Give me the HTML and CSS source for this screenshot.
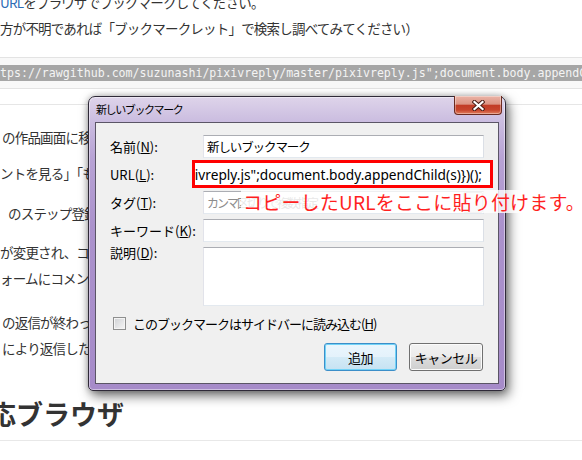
FILE: index.html
```html
<!DOCTYPE html>
<html lang="ja">
<head>
<meta charset="utf-8">
<title>pixivreply</title>
<link rel="stylesheet" href="styles.css">
</head>
<body>
<main class="page">
  <p class="intro first"><a class="link">URL</a>をブラウザでブックマークしてください。</p>
  <p class="intro">方が不明であれば「ブックマークレット」で検索し調べてみてください）</p>
  <pre class="code"><code class="sel">https://rawgithub.com/suzunashi/pixivreply/master/pixivreply.js";document.body.appendChild(s)})();</code></pre>
  <hr class="rule">
  <div class="steps">
    <p class="step s1">の作品画面に移</p>
    <p class="step s2">ントを見る」「もっ</p>
    <p class="step s3">のステップ登録</p>
    <p class="step s4">が変更され、コ<br>ォームにコメン</p>
    <p class="step s5">の返信が終わっ<br>により返信したコ</p>
  </div>
  <h2 class="heading">応ブラウザ</h2>
</main>

<div class="dialog">
  <div class="titlebar">
    <span class="title">新しいブックマーク</span>
    <span class="close"><svg width="13" height="11" viewBox="0 0 13 11"><path d="M2.5 2 L10.5 9 M10.5 2 L2.5 9" stroke="#4a1c15" stroke-width="4.2" stroke-linecap="square"/><path d="M2.5 2 L10.5 9 M10.5 2 L2.5 9" stroke="#ffffff" stroke-width="2.2" stroke-linecap="square"/></svg></span>
  </div>
  <div class="client">
    <div class="form">
      <label class="lbl">名前(<u>N</u>):</label>
      <div class="field"><span class="val">新しいブックマーク</span></div>
      <label class="lbl">URL(<u>L</u>):</label>
      <div class="field"></div>
      <label class="lbl">タグ(<u>T</u>):</label>
      <div class="field tag"><span class="ph">カンマ区切りで複数指定</span><span class="drop"></span></div>
      <label class="lbl">キーワード(<u>K</u>):</label>
      <div class="field"></div>
      <label class="lbl top">説明(<u>D</u>):</label>
      <div class="field area"></div>
    </div>
    <div class="check"><span class="box"></span><span class="check-text">このブックマークはサイドバーに読み込む(<u>H</u>)</span></div>
    <div class="buttons"><span class="btn default">追加</span><span class="btn">キャンセル</span></div>
  </div>
</div>

<div class="callout"><span class="callout-text">pixivreply.js";document.body.appendChild(s)})();</span></div>
<div class="note">コピーしたURLをここに貼り付けます。</div>
</body>
</html>
```
FILE: styles.css
```css
html, body {
  margin: 0;
  padding: 0;
}
body {
  width: 582px;
  height: 460px;
  overflow: hidden;
  position: relative;
  background: #ffffff;
  font-family: "Noto Sans CJK JP", "Noto Sans", sans-serif;
}

/* ---------- page behind the dialog ---------- */
.page {
  color: #333333;
  font-size: 13.5px;
  letter-spacing: -0.8px;
}
.intro {
  margin: 0;
  line-height: 26px;
  white-space: nowrap;
}
.intro.first {
  margin-top: -11px;
}
.link {
  color: #2d6cb5;
}
.code {
  margin: 16px 0 0;
  padding: 7px 0;
  border-top: 1px solid #e3e3e3;
  border-bottom: 1px solid #e3e3e3;
  background: #f8f8f8;
  white-space: nowrap;
  overflow: hidden;
  font: 11.6px/16px "DejaVu Sans Mono", "Liberation Mono", monospace;
  letter-spacing: 0;
}
.sel {
  display: inline-block;
  margin-left: -14px;
  line-height: 16px;
  background: #a6a6a6;
  color: #f4f4f4;
  font: inherit;
}
.rule {
  margin: 15px 0 0;
  border: 0;
  border-top: 1px solid #e6e6e6;
  height: 0;
}
.step {
  margin: 0;
  line-height: 26px;
  white-space: nowrap;
}
.s1 { margin-top: 19px; padding-left: 2px; }
.s2 { margin-top: 10px; }
.s3 { margin-top: 14px; padding-left: 8px; }
.s4 { margin-top: 13px; }
.s5 { margin-top: 18px; padding-left: 2px; }
.heading {
  margin: 35px 0 0;
  padding: 0 0 8px;
  border-bottom: 1px solid #e8e8e8;
  font-size: 27px;
  line-height: 36px;
  font-weight: 700;
  letter-spacing: 0;
  text-indent: -11px;
  color: #333333;
}

/* ---------- dialog ---------- */
.dialog {
  position: absolute;
  left: 88px;
  top: 96px;
  width: 404px;
  padding: 0 6px 6px 6px;
  border: 1px solid #2f2a38;
  border-radius: 7px 7px 5px 5px;
  background: linear-gradient(180deg, #ded4ea 0px, #cbbde0 24px, #b8a3d5 60px, #ab92cc 130px, #a68bc9 100%);
  box-shadow: inset 0 0 0 1px rgba(255,255,255,0.45), 3px 5px 12px rgba(0,0,0,0.55), 0 0 6px rgba(0,0,0,0.25);
}
.titlebar {
  position: relative;
  height: 25px;
  display: flex;
  align-items: center;
  padding-left: 1px;
}
.title {
  font-size: 11px;
  letter-spacing: -1.4px;
  color: #000000;
  line-height: 25px;
}
.close {
  position: absolute;
  top: -1px;
  left: 359px;
  width: 46px;
  height: 18px;
  border: 1px solid #6a2a20;
  border-top: 0;
  border-radius: 0 0 4px 4px;
  background: linear-gradient(180deg, #ebb3a6 0%, #dc9483 45%, #c23c26 52%, #c7452d 78%, #e2805f 100%);
  box-shadow: inset 0 0 0 1px rgba(255,255,255,0.35);
  display: flex;
  align-items: center;
  justify-content: center;
}
.close svg {
  display: block;
}
.client {
  border: 1px solid #5b5566;
  background: #f0f0f0;
  padding: 12px 14px 12px 14px;
}
.form {
  display: grid;
  grid-template-columns: 93px 281px;
  grid-template-rows: 23px 23px 23px 23px 59px;
  row-gap: 5px;
}
.lbl {
  display: flex;
  align-items: center;
  font-size: 13px;
  color: #000000;
  white-space: nowrap;
  letter-spacing: 0;
}
.lbl.top {
  align-items: flex-start;
  line-height: 14px;
  margin-top: -1px;
}
.field {
  box-sizing: border-box;
  background: #ffffff;
  border: 1px solid;
  border-color: #abadb3 #dbdfe6 #e3e9ef #e2e3ea;
  display: flex;
  align-items: center;
  padding-left: 3px;
  overflow: hidden;
  position: relative;
}
.val {
  font-size: 12.5px;
  letter-spacing: -1.1px;
  color: #000000;
  white-space: nowrap;
}
.ph {
  font-size: 12px;
  letter-spacing: -2px;
  color: #8c8c8c;
  white-space: nowrap;
}
.drop {
  position: absolute;
  right: 0;
  top: 0;
  width: 20px;
  height: 21px;
  box-sizing: border-box;
  border: 1px solid #c5c5c5;
  border-radius: 2px;
  background: linear-gradient(180deg, #f6f6f6, #e2e2e2);
}
.check {
  margin: 11px 0 0 3px;
  height: 13px;
  display: flex;
  align-items: center;
  gap: 7px;
}
.box {
  width: 13px;
  height: 13px;
  box-sizing: border-box;
  border: 1px solid #8e8f8f;
  background: linear-gradient(135deg, #cfd1d4 0%, #f6f6f6 100%);
  box-shadow: inset 0 0 0 1px #f4f4f4;
}
.check-text {
  font-size: 13px;
  letter-spacing: -1px;
  line-height: 13px;
  color: #000000;
  white-space: nowrap;
}
.buttons {
  margin-top: 13px;
  margin-right: 1px;
  display: flex;
  justify-content: flex-end;
  gap: 12px;
}
.btn {
  box-sizing: border-box;
  width: 74px;
  height: 28px;
  border: 1px solid #707070;
  border-radius: 3px;
  background: linear-gradient(180deg, #f2f2f2 0%, #ebebeb 50%, #dddddd 50%, #cfcfcf 100%);
  box-shadow: inset 0 0 0 1px #fbfbfb;
  display: flex;
  align-items: center;
  justify-content: center;
  font-size: 13px;
  letter-spacing: -0.5px;
  color: #000000;
}
.btn.default {
  width: 73px;
  border-color: #3c8fc9;
  box-shadow: inset 0 0 0 1px #72d3f7;
  background: linear-gradient(180deg, #eaf6fd 0%, #e4f2fb 50%, #d4ebf7 50%, #c6e2f2 100%);
}

/* ---------- annotations pasted over the screenshot ---------- */
.callout {
  position: absolute;
  left: 192px;
  top: 160px;
  width: 301px;
  height: 28px;
  box-sizing: border-box;
  border: 3px solid #ff0000;
  background: #ffffff;
  display: flex;
  justify-content: flex-end;
  align-items: center;
  overflow: hidden;
  padding-right: 8px;
}
.callout-text {
  flex: none;
  font-family: "Noto Sans", "Open Sans", sans-serif;
  font-size: 13.7px;
  color: #000000;
  white-space: nowrap;
}
.note {
  position: absolute;
  left: 241px;
  right: 0;
  top: 190px;
  height: 23px;
  padding-left: 2px;
  background: rgba(255,255,255,0.8);
  color: #ff1f1f;
  font-size: 19px;
  letter-spacing: 0.2px;
  line-height: 23px;
  white-space: nowrap;
}
```
